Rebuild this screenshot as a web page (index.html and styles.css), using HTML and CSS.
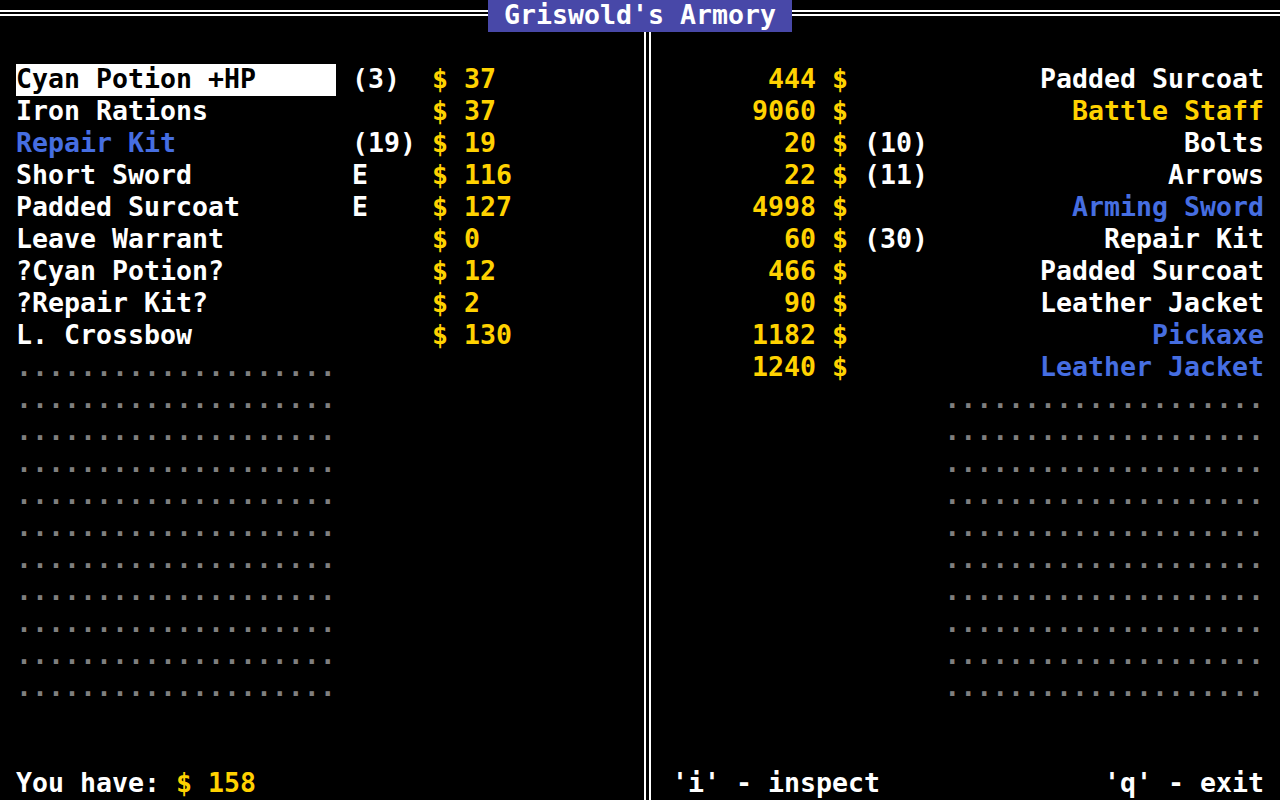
FILE: index.html
```html
<!DOCTYPE html>
<html lang="en">
<head>
<meta charset="utf-8">
<title>Griswold's Armory</title>
<link rel="stylesheet" href="styles.css">
</head>
<body>
<div class="screen">
  <header class="titlebar">
    <div class="rule"></div>
    <h1 class="title">Griswold's Armory</h1>
    <div class="rule"></div>
  </header>
  <main class="panes">
    <section class="pane pane-left">
      <ul class="list">
        <li class="row"><span class="name selected">Cyan Potion +HP</span><span class="qty">(3)</span><span class="cur">$</span><span class="price">37</span></li>
        <li class="row"><span class="name">Iron Rations</span><span class="qty"></span><span class="cur">$</span><span class="price">37</span></li>
        <li class="row"><span class="name blue">Repair Kit</span><span class="qty">(19)</span><span class="cur">$</span><span class="price">19</span></li>
        <li class="row"><span class="name">Short Sword</span><span class="qty">E</span><span class="cur">$</span><span class="price">116</span></li>
        <li class="row"><span class="name">Padded Surcoat</span><span class="qty">E</span><span class="cur">$</span><span class="price">127</span></li>
        <li class="row"><span class="name">Leave Warrant</span><span class="qty"></span><span class="cur">$</span><span class="price">0</span></li>
        <li class="row"><span class="name">?Cyan Potion?</span><span class="qty"></span><span class="cur">$</span><span class="price">12</span></li>
        <li class="row"><span class="name">?Repair Kit?</span><span class="qty"></span><span class="cur">$</span><span class="price">2</span></li>
        <li class="row"><span class="name">L. Crossbow</span><span class="qty"></span><span class="cur">$</span><span class="price">130</span></li>
        <li class="row"><span class="name dots">....................</span></li>
        <li class="row"><span class="name dots">....................</span></li>
        <li class="row"><span class="name dots">....................</span></li>
        <li class="row"><span class="name dots">....................</span></li>
        <li class="row"><span class="name dots">....................</span></li>
        <li class="row"><span class="name dots">....................</span></li>
        <li class="row"><span class="name dots">....................</span></li>
        <li class="row"><span class="name dots">....................</span></li>
        <li class="row"><span class="name dots">....................</span></li>
        <li class="row"><span class="name dots">....................</span></li>
        <li class="row"><span class="name dots">....................</span></li>
      </ul>
      <footer class="footer footer-left">You have: <span class="gold">$ 158</span></footer>
    </section>
    <div class="divider"><div class="double"></div></div>
    <section class="pane pane-right">
      <ul class="list">
        <li class="rrow"><span class="price">444</span><span class="cur">$</span><span class="qty"></span><span class="name">Padded Surcoat</span></li>
        <li class="rrow"><span class="price">9060</span><span class="cur">$</span><span class="qty"></span><span class="name gold">Battle Staff</span></li>
        <li class="rrow"><span class="price">20</span><span class="cur">$</span><span class="qty">(10)</span><span class="name">Bolts</span></li>
        <li class="rrow"><span class="price">22</span><span class="cur">$</span><span class="qty">(11)</span><span class="name">Arrows</span></li>
        <li class="rrow"><span class="price">4998</span><span class="cur">$</span><span class="qty"></span><span class="name blue">Arming Sword</span></li>
        <li class="rrow"><span class="price">60</span><span class="cur">$</span><span class="qty">(30)</span><span class="name">Repair Kit</span></li>
        <li class="rrow"><span class="price">466</span><span class="cur">$</span><span class="qty"></span><span class="name">Padded Surcoat</span></li>
        <li class="rrow"><span class="price">90</span><span class="cur">$</span><span class="qty"></span><span class="name">Leather Jacket</span></li>
        <li class="rrow"><span class="price">1182</span><span class="cur">$</span><span class="qty"></span><span class="name blue">Pickaxe</span></li>
        <li class="rrow"><span class="price">1240</span><span class="cur">$</span><span class="qty"></span><span class="name blue">Leather Jacket</span></li>
        <li class="rrow"><span class="name dots">....................</span></li>
        <li class="rrow"><span class="name dots">....................</span></li>
        <li class="rrow"><span class="name dots">....................</span></li>
        <li class="rrow"><span class="name dots">....................</span></li>
        <li class="rrow"><span class="name dots">....................</span></li>
        <li class="rrow"><span class="name dots">....................</span></li>
        <li class="rrow"><span class="name dots">....................</span></li>
        <li class="rrow"><span class="name dots">....................</span></li>
        <li class="rrow"><span class="name dots">....................</span></li>
        <li class="rrow"><span class="name dots">....................</span></li>
      </ul>
      <footer class="footer footer-right"><span>'i' - inspect</span><span>'q' - exit</span></footer>
    </section>
  </main>
</div>
</body>
</html>
```
FILE: styles.css
```css
* { box-sizing: border-box; }
html, body {
  margin: 0;
  padding: 0;
  background: #000;
}
body {
  width: 1280px;
  height: 800px;
  overflow: hidden;
  color: #fff;
  font-family: "DejaVu Sans Mono", "Liberation Mono", monospace;
  font-weight: bold;
  font-size: 26.57px;
  line-height: 30px;
}
.screen {
  width: 1280px;
  height: 800px;
  display: flex;
  flex-direction: column;
}
.titlebar {
  height: 32px;
  display: flex;
  flex: none;
}
.rule {
  flex: 1;
  margin-top: 10px;
  height: 6px;
  border-top: 2px solid #fff;
  border-bottom: 2px solid #fff;
}
.title {
  margin: 0;
  width: 304px;
  height: 32px;
  background: #4848a8;
  color: #fff;
  font-size: inherit;
  font-weight: inherit;
  line-height: 30px;
  text-align: center;
  white-space: pre;
}
.panes {
  flex: 1;
  display: flex;
}
.pane {
  display: flex;
  flex-direction: column;
  padding-top: 32px;
}
.pane-left { width: 640px; }
.pane-right { width: 624px; }
.divider {
  width: 16px;
  flex: none;
}
.double {
  margin-left: 4px;
  width: 7px;
  height: 100%;
  border-left: 2px solid #fff;
  border-right: 2px solid #fff;
}
.list {
  list-style: none;
  margin: 0;
  padding: 0;
}
.row {
  height: 32px;
  display: grid;
  grid-template-columns: 336px 80px 32px 1fr;
  align-items: start;
  padding-left: 16px;
  white-space: pre;
}
.row .name { width: 320px; height: 32px; }
.selected {
  background: #fff;
  color: #000;
}
.cur, .price { color: #ffd200; }
.gold { color: #ffd200; }
.blue { color: #466ee1; }
.dots { color: #7f7f7f; }
.rrow {
  height: 32px;
  display: grid;
  grid-template-columns: 160px 32px 16px 80px 1fr;
  align-items: start;
  padding-right: 16px;
  white-space: pre;
}
.rrow .price { text-align: right; grid-column: 1; }
.rrow .cur { grid-column: 2; text-align: right; }
.rrow .qty { grid-column: 4; }
.rrow .name { grid-column: 5; text-align: right; }
.rrow .name.gold { color: #ffd200; }
.footer {
  margin-top: auto;
  height: 32px;
  white-space: pre;
}
.footer-left { padding-left: 16px; }
.footer-right {
  display: flex;
  justify-content: space-between;
  padding: 0 16px;
}
```
